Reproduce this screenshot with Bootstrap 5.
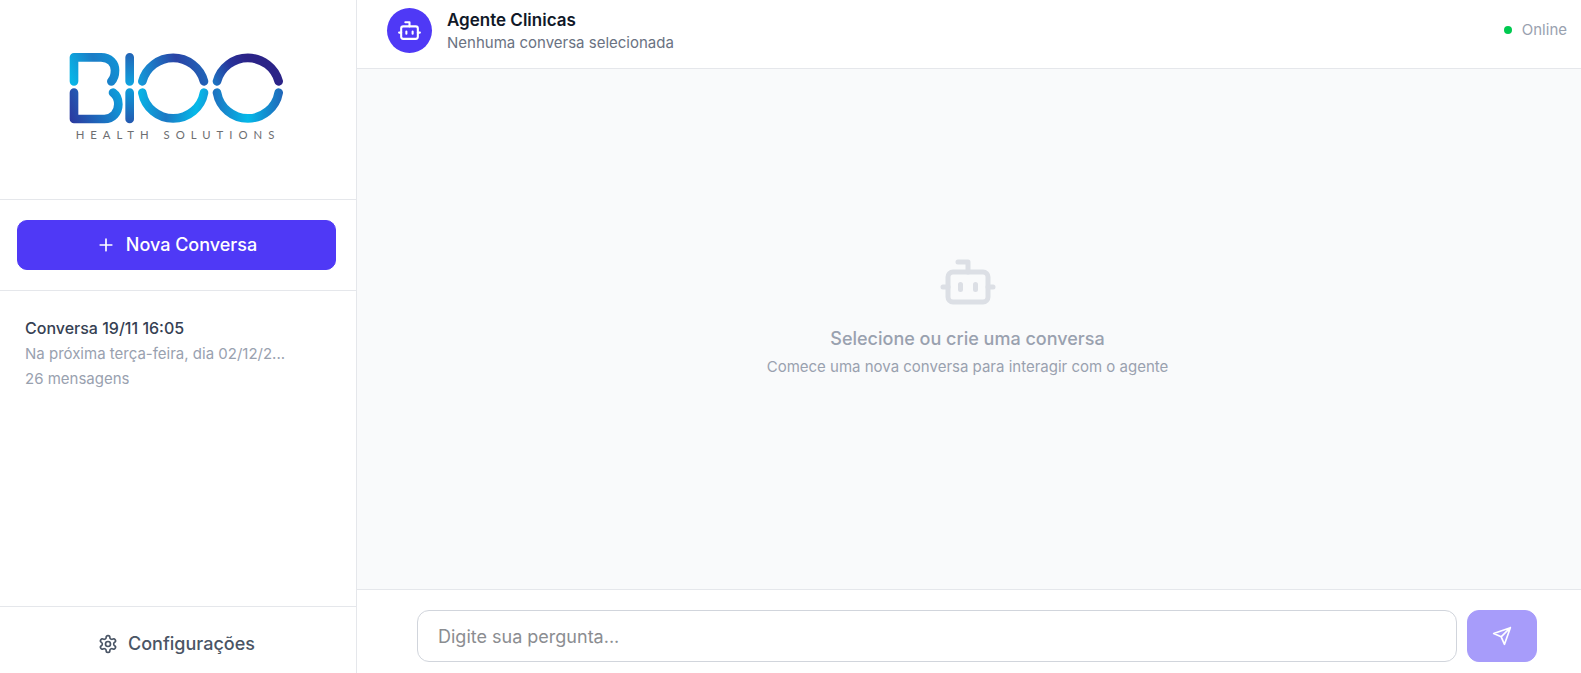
<!DOCTYPE html>
<html lang="pt-BR">
<head>
<meta charset="utf-8">
<meta name="viewport" content="width=device-width, initial-scale=1">
<title>Agente Clinicas</title>
<link href="https://cdn.jsdelivr.net/npm/bootstrap@5.3.0/dist/css/bootstrap.min.css" rel="stylesheet">
<style>
  :root { --line: #e5e7eb; --brand: #4f39f6; --muted: #99a1af; --soft: #6a7282; }
  body { font-family: Inter, "Liberation Sans", sans-serif; font-size: 16px; line-height: 24px; color: #101828; background: #fff; }
  .line-b { border-bottom: 1px solid var(--line); }
  .line-t { border-top: 1px solid var(--line); }
  .icon { fill: none; stroke: currentColor; stroke-width: 2; stroke-linecap: round; stroke-linejoin: round; flex: none; }
  .side { width: 357px; border-right: 1px solid var(--line); }
  .brand-box { padding: 35px 6px 44px 0; }
  .brand-box svg { width: 250px; height: 120px; }
  .pad-x { padding-left: 17px; padding-right: 20px; }
  .new-box { padding-top: 20px; padding-bottom: 20px; }
  .text-main { font-size: 18px; line-height: 28px; font-weight: 500; }
  .side .text-main { gap: 10px; }
  .btn-new { height: 50px; border-radius: 10px; --bs-btn-color: #fff; --bs-btn-bg: var(--brand); --bs-btn-border-color: var(--brand); --bs-btn-hover-color: #fff; --bs-btn-hover-bg: #432dd7; --bs-btn-hover-border-color: #432dd7; }
  .chat-list { padding: 25px 25px 0; }
  .chat-item { color: #364153; line-height: 25px; }
  .chat-title { font-weight: 500; }
  .chat-note, .status, .empty { color: var(--muted); }
  .sub { font-size: 15px; }
  .conf-box { padding-top: 12px; padding-bottom: 4px; }
  .btn-conf { height: 50px; --bs-btn-color: #4a5565; --bs-btn-hover-color: #101828; }
  .top { height: 69px; padding: 0 14px 8px 30px; }
  .avatar { width: 45px; height: 45px; background: var(--brand); color: #fff; }
  .agent-box { padding-top: 2px; margin-left: 15px; }
  .agent { font-size: 17px; line-height: 23px; font-weight: 600; }
  .agent-sub { line-height: 22px; color: var(--soft); }
  .status { gap: 10px; }
  .dot { width: 8px; height: 8px; background: #00c950; }
  .stage { background: #f9fafb; padding-bottom: 28px; padding-right: 3px; }
  .stage .text-main { margin-top: 13px; margin-bottom: 2px; }
  .empty .icon { color: #dcdfe5; }
  .composer { gap: 10px; padding: 20px 44px 11px 60px; }
  .ask { height: 52px; border-radius: 12px; border-color: #d1d5dc; padding: 0 20px; font-size: 18px; }
  .ask::placeholder { color: #8b8d91; }
  .btn-send { width: 70px; height: 52px; border-radius: 12px; --bs-btn-disabled-color: #fff; --bs-btn-disabled-bg: #a79cfa; --bs-btn-disabled-border-color: #a79cfa; --bs-btn-disabled-opacity: 1; }
</style>
</head>
<body>
<svg class="d-none" aria-hidden="true">
  <symbol id="bot" viewBox="0 0 24 24"><path d="M12 8V4H8"/><rect width="16" height="12" x="4" y="8" rx="2"/><path d="M2 14h2M20 14h2M15 13v2M9 13v2"/></symbol>
</svg>
<div class="d-flex vh-100 overflow-hidden">
  <aside class="side d-flex flex-column flex-shrink-0">
    <div class="brand-box line-b d-flex justify-content-center">
      <svg viewBox="0 0 750 360" role="img" aria-label="BIOO Health Solutions">
        <defs>
          <linearGradient id="g1" gradientUnits="userSpaceOnUse" x1="60" y1="120" x2="200" y2="60"><stop offset="0" stop-color="#08b4e6"/><stop offset=".55" stop-color="#1c7cc6"/><stop offset="1" stop-color="#0f94d6"/></linearGradient>
          <linearGradient id="g2" gradientUnits="userSpaceOnUse" x1="60" y1="252" x2="216" y2="185"><stop offset="0" stop-color="#2b3aa0"/><stop offset="1" stop-color="#0e9fdc"/></linearGradient>
          <linearGradient id="g3" gradientUnits="userSpaceOnUse" x1="0" y1="54" x2="0" y2="150"><stop offset="0" stop-color="#2364b6"/><stop offset="1" stop-color="#0fa3df"/></linearGradient>
          <linearGradient id="g4" gradientUnits="userSpaceOnUse" x1="0" y1="161" x2="0" y2="264"><stop offset="0" stop-color="#0e9cda"/><stop offset="1" stop-color="#2459b0"/></linearGradient>
          <linearGradient id="g5" gradientUnits="userSpaceOnUse" x1="264" y1="150" x2="475" y2="100"><stop offset="0" stop-color="#139fdc"/><stop offset=".6" stop-color="#2a43a5"/><stop offset="1" stop-color="#1f68ba"/></linearGradient>
          <linearGradient id="g6" gradientUnits="userSpaceOnUse" x1="264" y1="165" x2="475" y2="200"><stop offset="0" stop-color="#06b8e8"/><stop offset=".45" stop-color="#1c78c4"/><stop offset=".85" stop-color="#05b9e9"/><stop offset="1" stop-color="#169ad8"/></linearGradient>
          <linearGradient id="g7" gradientUnits="userSpaceOnUse" x1="488" y1="150" x2="600" y2="90"><stop offset="0" stop-color="#1c79c5"/><stop offset=".6" stop-color="#28339a"/><stop offset="1" stop-color="#2b2387"/></linearGradient>
          <linearGradient id="g8" gradientUnits="userSpaceOnUse" x1="488" y1="165" x2="699" y2="165"><stop offset="0" stop-color="#1f70bf"/><stop offset=".5" stop-color="#04b9e9"/><stop offset="1" stop-color="#2166b8"/></linearGradient>
        </defs>
        <g fill="none" stroke-width="26" stroke-linejoin="round" stroke-linecap="round">
          <path stroke="url(#g1)" d="M72 139V67H153C179 67 195 84 195 106Q195 128 184 139"/>
          <path stroke="url(#g2)" d="M72 173V252H163C188 252 205 233 205 208Q205 184 189 173"/>
          <path stroke="url(#g3)" d="M239 67V139L239.1 139"/>
          <path stroke="url(#g4)" d="M239 173V252L239.1 252"/>
          <path stroke="url(#g5)" d="M277 139A96 96 0 0 1 462 139"/>
          <path stroke="url(#g6)" d="M277 173A94 94 0 0 0 462 173"/>
          <path stroke="url(#g7)" d="M501 139A96 96 0 0 1 686 139"/>
          <path stroke="url(#g8)" d="M501 173A94 94 0 0 0 686 173"/>
        </g>
        <text x="77" y="312" font-family="Lato, sans-serif" font-size="34" letter-spacing="18" fill="#6d6e71">HEALTH SOLUTIONS</text>
      </svg>
    </div>
    <div class="new-box pad-x line-b">
      <button type="button" class="btn btn-new text-main w-100 d-flex align-items-center justify-content-center">
        <svg class="icon" width="20" height="20" viewBox="0 0 24 24"><path d="M5 12h14M12 5v14"/></svg>
        Nova Conversa
      </button>
    </div>
    <nav class="chat-list flex-grow-1 overflow-hidden" aria-label="Conversas">
      <a href="#" class="chat-item d-block text-decoration-none">
        <span class="d-block chat-title">Conversa 19/11 16:05</span>
        <span class="d-block chat-note sub">Na próxima terça-feira, dia 02/12/2...</span>
        <span class="d-block chat-note sub">26 mensagens</span>
      </a>
    </nav>
    <div class="conf-box pad-x line-t">
      <button type="button" class="btn btn-conf border-0 text-main w-100 d-flex align-items-center justify-content-center">
        <svg class="icon" width="20" height="20" viewBox="0 0 24 24"><path d="M12.22 2h-.44a2 2 0 0 0-2 2v.18a2 2 0 0 1-1 1.73l-.43.25a2 2 0 0 1-2 0l-.15-.08a2 2 0 0 0-2.73.73l-.22.38a2 2 0 0 0 .73 2.73l.15.1a2 2 0 0 1 1 1.72v.51a2 2 0 0 1-1 1.74l-.15.09a2 2 0 0 0-.73 2.73l.22.38a2 2 0 0 0 2.73.73l.15-.08a2 2 0 0 1 2 0l.43.25a2 2 0 0 1 1 1.73V20a2 2 0 0 0 2 2h.44a2 2 0 0 0 2-2v-.18a2 2 0 0 1 1-1.73l.43-.25a2 2 0 0 1 2 0l.15.08a2 2 0 0 0 2.73-.73l.22-.39a2 2 0 0 0-.73-2.73l-.15-.08a2 2 0 0 1-1-1.74v-.5a2 2 0 0 1 1-1.74l.15-.09a2 2 0 0 0 .73-2.73l-.22-.38a2 2 0 0 0-2.73-.73l-.15.08a2 2 0 0 1-2 0l-.43-.25a2 2 0 0 1-1-1.73V4a2 2 0 0 0-2-2z"/><circle cx="12" cy="12" r="3"/></svg>
        Configurações
      </button>
    </div>
  </aside>
  <main class="d-flex flex-column flex-grow-1">
    <header class="top line-b d-flex align-items-center">
      <div class="avatar rounded-circle d-flex align-items-center justify-content-center">
        <svg class="icon" width="25" height="25"><use href="#bot"/></svg>
      </div>
      <div class="agent-box">
        <h1 class="agent mb-0">Agente Clinicas</h1>
        <p class="agent-sub sub mb-0">Nenhuma conversa selecionada</p>
      </div>
      <div class="status sub ms-auto d-flex align-items-center">
        <span class="dot rounded-circle"></span>
        <span>Online</span>
      </div>
    </header>
    <section class="stage empty flex-grow-1 d-flex flex-column align-items-center justify-content-center text-center">
      <svg class="icon" width="60" height="60"><use href="#bot"/></svg>
      <h2 class="text-main">Selecione ou crie uma conversa</h2>
      <p class="sub mb-0">Comece uma nova conversa para interagir com o agente</p>
    </section>
    <form class="composer line-t d-flex">
      <input type="text" class="form-control ask" placeholder="Digite sua pergunta..." aria-label="Digite sua pergunta">
      <button type="submit" class="btn btn-send flex-shrink-0 d-flex align-items-center justify-content-center" disabled aria-label="Enviar">
        <svg class="icon" width="20" height="20" viewBox="0 0 24 24"><path d="m22 2-7 20-4-9-9-4zM22 2 11 13"/></svg>
      </button>
    </form>
  </main>
</div>
<script src="https://cdn.jsdelivr.net/npm/bootstrap@5.3.0/dist/js/bootstrap.bundle.min.js"></script>
</body>
</html>
